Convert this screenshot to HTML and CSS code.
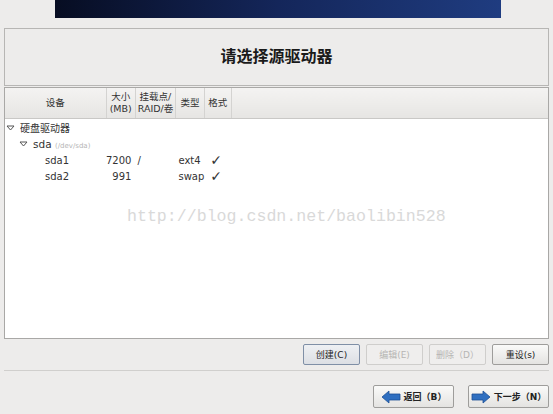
FILE: index.html
```html
<!DOCTYPE html>
<html lang="zh">
<head>
    <meta charset="UTF-8">
    <title>请选择源驱动器</title>
    <link rel="stylesheet" href="styles.css">
</head>
<body>
    <div class="banner"></div>

    <div class="title-box">
        <h1>请选择源驱动器</h1>
    </div>

    <div class="panel">
        <table>
            <thead>
                <tr>
                    <th class="c-dev">设备</th>
                    <th class="c-size">大小<br>(MB)</th>
                    <th class="c-mount">挂载点/<br>RAID/卷</th>
                    <th class="c-type">类型</th>
                    <th class="c-fmt">格式</th>
                    <th class="c-rest"></th>
                </tr>
            </thead>
            <tbody>
                <tr>
                    <td colspan="6" class="lvl0"><svg class="tri" width="9" height="6" viewBox="0 0 9 6"><path d="M1 1 L8 1 L4.5 5 Z" fill="#fff" stroke="#555" stroke-width="1"/></svg>硬盘驱动器</td>
                </tr>
                <tr>
                    <td colspan="6" class="lvl1"><svg class="tri" width="9" height="6" viewBox="0 0 9 6"><path d="M1 1 L8 1 L4.5 5 Z" fill="#fff" stroke="#555" stroke-width="1"/></svg>sda <span class="path">(/dev/sda)</span></td>
                </tr>
                <tr>
                    <td class="lvl2">sda1</td>
                    <td class="num">7200</td>
                    <td>/</td>
                    <td>ext4</td>
                    <td class="check">✓</td>
                    <td></td>
                </tr>
                <tr>
                    <td class="lvl2">sda2</td>
                    <td class="num">991</td>
                    <td></td>
                    <td>swap</td>
                    <td class="check">✓</td>
                    <td></td>
                </tr>
            </tbody>
        </table>
        <div class="watermark">http://blog.csdn.net/baolibin528</div>
    </div>

    <div class="actions">
        <button class="btn active">创建(C)</button>
        <button class="btn" disabled>编辑(E)</button>
        <button class="btn" disabled>删除（D）</button>
        <button class="btn">重设(s)</button>
    </div>

    <div class="nav">
        <button class="btn nav-btn">
            <svg width="20" height="14" viewBox="0 0 20 14"><path d="M1 7 L8 1 L8 4 L19 4 L19 10 L8 10 L8 13 Z" fill="#2f6fc0" stroke="#1d4f94" stroke-width="0.8"/></svg>
            返回（B）
        </button>
        <button class="btn nav-btn">
            <svg width="20" height="14" viewBox="0 0 20 14"><path d="M19 7 L12 1 L12 4 L1 4 L1 10 L12 10 L12 13 Z" fill="#2f6fc0" stroke="#1d4f94" stroke-width="0.8"/></svg>
            下一步（N）
        </button>
    </div>
</body>
</html>
```

FILE: styles.css
```css
* {
    margin: 0;
    padding: 0;
    box-sizing: border-box;
}

body {
    width: 553px;
    height: 414px;
    background: #edeceb;
    font-family: "DejaVu Sans", "Noto Sans CJK SC", sans-serif;
    color: #222;
    padding: 0 4px;
    overflow: hidden;
}

.banner {
    width: 446px;
    height: 18px;
    margin-left: 51px;
    background: linear-gradient(90deg, #070d22, #14265a 50%, #1f3c80);
}

.title-box {
    margin-top: 10px;
    height: 58px;
    border: 1px solid #b7b6b4;
    display: flex;
    align-items: center;
    justify-content: center;
    padding-bottom: 4px;
}

.title-box h1 {
    font-size: 16px;
    font-weight: bold;
    color: #1a1a1a;
}

.panel {
    position: relative;
    margin-top: 1px;
    height: 252px;
    background: #fff;
    border: 1px solid #a9a8a6;
}

table {
    width: 100%;
    border-collapse: collapse;
    font-size: 10px;
}

thead th {
    height: 30px;
    font-weight: normal;
    font-size: 9.5px;
    line-height: 12px;
    background: linear-gradient(#f4f3f2, #e6e5e3);
    border-right: 1px solid #d4d3d1;
    border-bottom: 1px solid #c9c8c6;
    text-align: center;
    color: #333;
}

.c-dev { width: 101px; }
.c-size { width: 29px; }
.c-mount { width: 40px; }
.c-type { width: 28px; }
.c-fmt { width: 27px; }
.c-rest { border-right: none; }

tbody td {
    height: 16px;
    color: #333;
    white-space: nowrap;
}

tbody tr:first-child td {
    padding-top: 1px;
    height: 18px;
}

.tri {
    margin-right: 5px;
    vertical-align: 1px;
}

.lvl0 { padding-left: 1px; }
.lvl1 { padding-left: 14px; font-size: 10.5px; }
.lvl2 { padding-left: 40px; }

.path {
    font-size: 7px;
    color: #b5b5b5;
}

.num {
    text-align: right;
    padding-right: 4px;
}

tbody td:nth-child(3) { padding-left: 2px; }
tbody td:nth-child(4) { padding-left: 3px; }

.check {
    font-size: 14px;
    line-height: 14px;
    padding-left: 6px;
}

.watermark {
    position: absolute;
    left: 122px;
    top: 119px;
    font-family: "Liberation Mono", monospace;
    font-size: 16.6px;
    color: #d9d9d9;
}

.btn {
    height: 21px;
    font-family: "DejaVu Sans", "Noto Sans CJK SC", sans-serif;
    font-size: 9px;
    color: #222;
    background: linear-gradient(#fafaf9, #e4e3e1);
    border: 1px solid #9e9d9b;
    border-radius: 2px;
}

.btn:disabled {
    color: #b6b5b3;
    border-color: #cfcecc;
    background: #efeeed;
}

.btn.active {
    border-color: #7f8fa6;
    background: linear-gradient(#eef0f3, #dcdfe4);
}

.actions {
    display: flex;
    justify-content: flex-end;
    gap: 6px;
    margin-top: 5px;
    padding-bottom: 5px;
    border-bottom: 1px solid #d0cfcd;
}

.actions .btn {
    width: 57px;
}

.nav {
    display: flex;
    justify-content: flex-end;
    gap: 14px;
    margin-top: 14px;
}

.nav-btn {
    width: 81px;
    height: 23px;
    display: flex;
    align-items: center;
    justify-content: center;
    gap: 3px;
    font-weight: bold;
    font-size: 9px;
}
```
